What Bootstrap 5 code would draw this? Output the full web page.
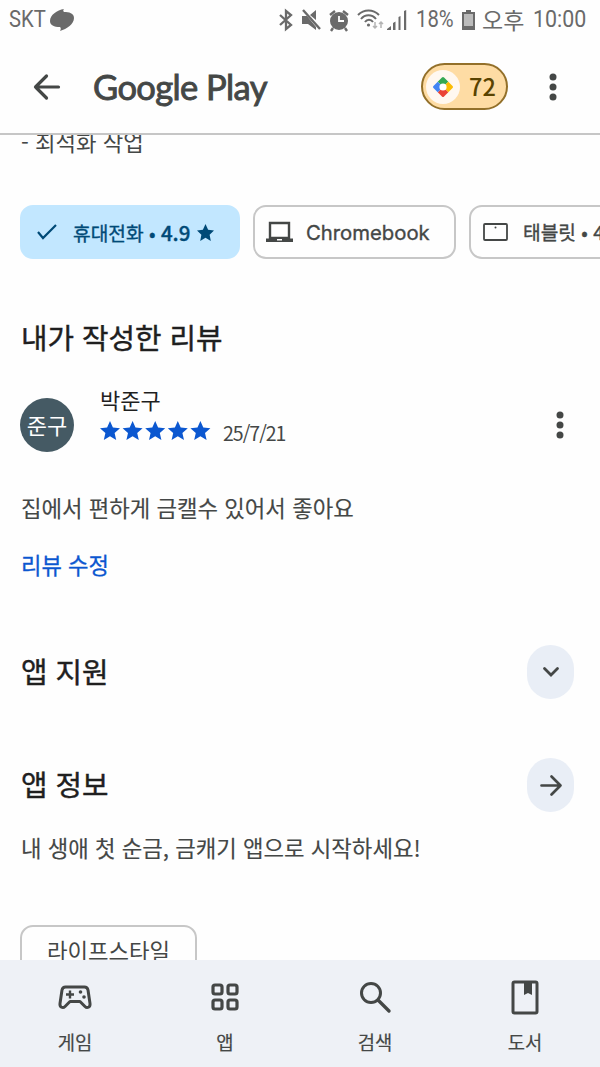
<!DOCTYPE html>
<html lang="ko">
<head>
<meta charset="utf-8">
<meta name="viewport" content="width=device-width, initial-scale=1">
<title>Google Play</title>
<link href="https://cdn.jsdelivr.net/npm/bootstrap@5.3.0/dist/css/bootstrap.min.css" rel="stylesheet">
<style>
html,body{height:100%}
body{font-family:Roboto,"Noto Sans CJK KR",sans-serif;background:#fefefe;color:#444746;overflow:hidden}
svg{display:block;flex:none;overflow:visible}
.screen{width:600px;height:1067px;white-space:nowrap}
.kr{font-family:"Noto Sans CJK KR",sans-serif}
.statusbar{height:40px;color:#6a6a6a;font-size:23px;line-height:40px;padding-left:9px}
.narrow{display:inline-block;transform-origin:0 50%;transform:scaleX(.88)}
.topbar{height:95px;border-bottom:2px solid #c6c6c6;padding:0 43px 0 33px}
.wordmark{font-family:Lato,sans-serif;font-size:34.5px;line-height:40px;letter-spacing:-.6px;-webkit-text-stroke:.9px #444746;margin-left:33px}
.points{width:87px;height:47px;border:2px solid #93702a;background:#fedca4;color:#5a4300;font:500 23.5px/43px "Noto Sans CJK KR",sans-serif;padding-left:3px}
.coin{width:34px;height:34px;background:#fff8f0}
.content{min-height:0;padding-left:20px}
.cutline{font-size:22.3px;line-height:28px;height:28px;margin-top:-8px;padding-left:1px}
.chips{margin-top:50px;gap:13px}
.chip{height:54px;border:2px solid #c7c7c7;border-radius:13px;font-size:19.2px;flex:none}
.chip span{-webkit-text-stroke:.35px currentColor}
.chip-on{background:#c2e7ff;border-color:#c2e7ff;color:#004a77}
.heading{font-size:28.8px;line-height:40px;font-weight:400;-webkit-text-stroke:.45px #1f1f1f;color:#1f1f1f;margin:0;padding-left:1px}
.avatar{width:54px;height:54px;background:#455a64;color:#fff;font-size:22px;line-height:52px}
.body-line{font-size:22.3px;line-height:32px;padding-left:1px;-webkit-text-stroke:.15px currentColor}
.edit{color:#0b57d0;font-size:22.2px;line-height:32px;padding-left:1px;-webkit-text-stroke:.3px currentColor}
.pill{width:47px;height:54px;border-radius:24px;background:#e9eef6;flex:none}
.tagbox{width:177px;height:54px;border:2px solid #c7c7c7;border-radius:13px;font-size:22.3px;line-height:46px}
.tabs{height:107px;background:#eef1f6;font-size:18.8px;flex:none}
.tabs .tab{width:150px;padding-top:16px}
.tabs .tab span{line-height:26px;margin-top:13px;-webkit-text-stroke:.2px currentColor}
</style>
</head>
<body>
<div class="screen d-flex flex-column overflow-hidden">
  <div class="statusbar d-flex align-items-center flex-shrink-0">
    <span class="narrow" style="width:41px">SKT</span>
    <svg width="24" height="22" viewBox="0 0 24 22" fill="#6a6a6a"><path d="M14 0c-1 1-1 2 0 3 5 0 10 1 10 6 0 6-7 11-14 13 1-2 1-3 0-4C4 18 0 16 0 12 0 6 7 1 14 0Z"/></svg>
    <svg class="ms-auto" style="margin-right:9px" width="14" height="22" viewBox="0 0 14 22" fill="none" stroke="#6a6a6a" stroke-width="2.300"><path d="m1 6 11 10-5 4V2l5 4L1 16"/></svg>
    <svg style="margin-right:8px" width="19" height="20" viewBox="0 0 19 20" fill="#6a6a6a"><path d="M0 6h5l9 11v3L6 14H0ZM8 5l6-5v10Z"/><path d="m1 0 17 19" stroke="#6a6a6a" stroke-width="2.400"/></svg>
    <svg style="margin-right:8px" width="20" height="21" viewBox="0 0 20 21"><circle cx="10" cy="11" r="9" fill="#6a6a6a"/><path d="m1 5 5-4m8 0 5 4M4 18l-2 3m14-3 2 3" stroke="#6a6a6a" stroke-width="2.400"/><path d="M10 6v5h5" fill="none" stroke="#fff" stroke-width="1.800"/></svg>
    <svg style="margin-right:4px" width="26" height="20" viewBox="0 0 26 20" fill="none" stroke="#6a6a6a" stroke-width="2"><path d="M1 5c6-6 15-6 21 0M4 9c4-5 11-5 15 0M8 12c2-3 6-3 8 0"/><circle cx="11.500" cy="15" r="1.600" fill="#6a6a6a" stroke="none"/><path d="M18 12v6m-2-2 2 2 2-2m4 2v-6m-2 2 2-2 2 2" stroke="#b4b4b4" stroke-width="1.500"/></svg>
    <svg style="margin-right:9px" width="20" height="20" viewBox="0 0 20 20" fill="#6a6a6a"><path d="M0 20v-1l4-3v4zM6 13l2.500-1.500V20H6zM11.500 7l2-1v14h-2zM17 1l2.200-1v20H17z"/></svg>
    <span class="narrow" style="width:46px">18%</span>
    <svg style="margin-right:7px" width="13" height="20" viewBox="0 0 13 20"><path d="M4 0h5v2h4v18H0V2h4Z" fill="#6a6a6a"/><path d="M2 4h9v12H2Z" fill="#bbb"/></svg>
    <span class="kr" style="width:51px;font-size:23px;line-height:38px;margin-top:-2px">오후</span>
    <span class="narrow" style="width:67px;transform:scaleX(.93)">10:00</span>
  </div>

  <header class="topbar d-flex align-items-center flex-shrink-0">
    <svg width="27" height="26" viewBox="0 0 27 26" fill="none" stroke="#444746" stroke-width="3.200" stroke-linecap="round" stroke-linejoin="round"><path d="M25.500 13H2.500M13.500 2l-11 11 11 11"/></svg>
    <span class="wordmark">Google Play</span>
    <div class="points rounded-pill d-flex align-items-center ms-auto" style="margin-right:41px">
      <span class="coin rounded-circle d-flex align-items-center justify-content-center">
        <svg width="20" height="20" viewBox="-10 -10 20 20"><defs><clipPath id="gem"><rect x="-7.500" y="-7.500" width="15" height="15" rx="1.500" transform="rotate(45)"/></clipPath></defs><g clip-path="url(#gem)"><path d="M0 0-11-11H11Z" fill="#34a853"/><path d="M0 0 11-11V11Z" fill="#fbbc04"/><path d="M0 0 11 11H-11Z" fill="#ea4335"/><path d="M0 0-11 11V-11Z" fill="#4285f4"/></g><circle r="3.600" fill="#fff"/></svg>
      </span><span style="margin-left:9px">72</span>
    </div>
    <svg width="8" height="28" viewBox="0 0 8 28" fill="#444746"><circle cx="4" cy="4" r="3.500"/><circle cx="4" cy="14" r="3.500"/><circle cx="4" cy="24" r="3.500"/></svg>
  </header>

  <main class="content kr flex-grow-1 overflow-hidden">
    <div class="cutline">- 최석화 작업</div>
    <div class="chips d-flex">
      <div class="chip chip-on d-flex align-items-center" style="width:220px;padding-left:15px">
        <svg width="20" height="16" viewBox="0 0 20 16" fill="none" stroke="#004a77" stroke-width="2.200"><path d="m1 8 5 6L19 1"/></svg>
        <span style="margin-left:16px">휴대전화 • <span style="font-size:20.500px;font-weight:500">4.9</span></span>
        <svg style="margin-left:7px" width="17" height="17" viewBox="0 0 24 24" fill="#004a77"><path d="m12 0 3.700 8 8.300 1-6.200 6 1.700 9-7.500-4.500L4.500 24l1.700-9L0 9l8.300-1Z"/></svg>
      </div>
      <div class="chip d-flex align-items-center" style="width:203px;padding-left:11px">
        <svg width="27" height="20" viewBox="0 0 27 20"><path d="M4 1h19v15H4Z" fill="#fff" stroke="#444746" stroke-width="2.400"/><path d="M0 16.500h27V20H0Z" fill="#444746"/><path d="M11 17h5v1.500h-5Z" fill="#fff"/></svg>
        <span style="margin-left:13px;font-family:Inter,sans-serif;font-size:20.300px;padding-top:2px">Chromebook</span>
      </div>
      <div class="chip d-flex align-items-center" style="width:220px;padding-left:12px">
        <svg width="25" height="18" viewBox="0 0 25 18"><rect x="1" y="1" width="23" height="16" rx="1" fill="none" stroke="#444746" stroke-width="1.800"/><circle cx="12.500" cy="4.500" r="1" fill="#444746"/></svg>
        <span style="margin-left:15px">태블릿 • 4.8</span>
      </div>
    </div>

    <h2 class="heading" style="margin-top:58px">내가 작성한 리뷰</h2>
    <div class="d-flex align-items-center" style="margin-top:28px;height:80px;padding-right:36px">
      <div class="avatar rounded-circle text-center">준구</div>
      <div style="margin-left:26px;margin-top:-18px">
        <div style="font-size:22px;line-height:30px;color:#1f1f1f">박준구</div>
        <div class="d-flex align-items-center" style="height:34px">
          <svg width="110" height="20" viewBox="0 0 110 20" fill="#0b57d0"><defs><path id="st" d="m10 0 2.900 6.500 7.100.7-5.400 4.700L16.200 19 10 15.300 3.800 19l1.600-7.100L0 7.200l7.100-.7Z"/></defs><use href="#st"/><use href="#st" x="22.600"/><use href="#st" x="45.200"/><use href="#st" x="67.800"/><use href="#st" x="90.400"/></svg>
          <span style="margin-left:13px;font-size:19.500px;letter-spacing:-1px;padding-top:4px">25/7/21</span>
        </div>
      </div>
      <svg class="ms-auto" width="8" height="28" viewBox="0 0 8 28" fill="#444746"><circle cx="4" cy="4" r="3.500"/><circle cx="4" cy="14" r="3.500"/><circle cx="4" cy="24" r="3.500"/></svg>
    </div>
    <div class="body-line" style="margin-top:26px">집에서 편하게 금캘수 있어서 좋아요</div>
    <div class="edit" style="margin-top:25px">리뷰 수정</div>

    <div class="d-flex align-items-center justify-content-between" style="margin-top:65px;padding-right:26px">
      <h2 class="heading" style="margin-top:-2px">앱 지원</h2>
      <div class="pill d-flex align-items-center justify-content-center"><svg width="16" height="10" viewBox="0 0 16 10" fill="none" stroke="#444746" stroke-width="2.800" stroke-linecap="round"><path d="m1.500 1.500 6.500 6.500 6.500-6.500"/></svg></div>
    </div>
    <div class="d-flex align-items-center justify-content-between" style="margin-top:59px;padding-right:26px">
      <h2 class="heading" style="margin-top:-2px">앱 정보</h2>
      <div class="pill d-flex align-items-center justify-content-center"><svg width="22" height="21" viewBox="0 0 22 21" fill="none" stroke="#444746" stroke-width="2.700" stroke-linecap="round" stroke-linejoin="round"><path d="M1.500 10.500h19M11.500 1.500l9 9-9 9"/></svg></div>
    </div>
    <div class="body-line" style="margin-top:19px">내 생애 첫 순금, 금캐기 앱으로 시작하세요!</div>
    <div class="tagbox text-center" style="margin-top:62px">라이프스타일</div>
  </main>

  <nav class="tabs kr d-flex">
    <div class="tab d-flex flex-column align-items-center">
      <svg width="40" height="40" viewBox="0 0 40 40" fill="none" stroke="#444746" stroke-width="3" stroke-linejoin="round"><path d="M10.500 11h19c2 0 3 1 3.500 3l2 13.500c.5 4-3 5-5 3l-5-5H15l-5 5c-2 2-5.500 1-5-3L7 14c.5-2 1.500-3 3.500-3Z"/><path d="M11 18.500h8M15 14.500v8" stroke-width="2.400"/><circle cx="25.500" cy="16" r="1.800" fill="#444746" stroke="none"/><circle cx="29" cy="21" r="1.800" fill="#444746" stroke="none"/></svg>
      <span>게임</span>
    </div>
    <div class="tab d-flex flex-column align-items-center">
      <svg width="40" height="40" viewBox="0 0 40 40" fill="none" stroke="#444746" stroke-width="3.200"><rect x="8" y="9" width="9" height="9" rx="2"/><rect x="23" y="9" width="9" height="9" rx="2"/><rect x="8" y="24" width="9" height="9" rx="2"/><rect x="23" y="24" width="9" height="9" rx="2"/></svg>
      <span>앱</span>
    </div>
    <div class="tab d-flex flex-column align-items-center">
      <svg width="40" height="40" viewBox="0 0 40 40" fill="none" stroke="#444746" stroke-width="3"><circle cx="16" cy="17" r="9.500"/><path d="m23 24 11 11" stroke-width="3.400" stroke-linecap="round"/></svg>
      <span>검색</span>
    </div>
    <div class="tab d-flex flex-column align-items-center">
      <svg width="40" height="40" viewBox="0 0 40 40"><rect x="8" y="6" width="24" height="31" rx="1.500" fill="none" stroke="#444746" stroke-width="3"/><path d="M19 6h8v13l-4-2-4 2Z" fill="#444746"/></svg>
      <span>도서</span>
    </div>
  </nav>
</div>
<script src="https://cdn.jsdelivr.net/npm/bootstrap@5.3.0/dist/js/bootstrap.bundle.min.js"></script>
</body>
</html>
